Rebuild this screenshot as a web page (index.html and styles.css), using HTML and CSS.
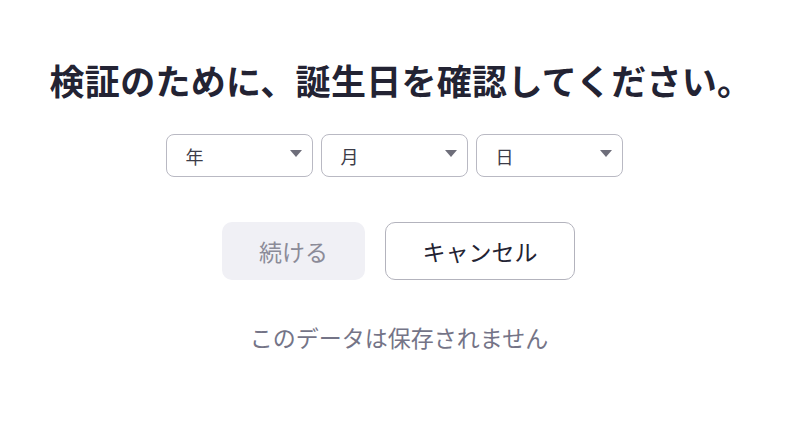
FILE: index.html
```html
<!DOCTYPE html>
<html lang="ja">
<head>
    <meta charset="UTF-8">
    <title>誕生日の確認</title>
    <link rel="stylesheet" href="styles.css">
</head>
<body>
    <div class="age-gate">
        <h1 class="title">検証のために、誕生日を確認してください。</h1>
        <div class="selects">
            <div class="select"><span>年</span><i class="caret"></i></div>
            <div class="select"><span>月</span><i class="caret"></i></div>
            <div class="select"><span>日</span><i class="caret"></i></div>
        </div>
        <div class="actions">
            <button class="btn btn-disabled">続ける</button>
            <button class="btn btn-outline">キャンセル</button>
        </div>
        <p class="note">このデータは保存されません</p>
    </div>
</body>
</html>
```

FILE: styles.css
```css
* {
    margin: 0;
    padding: 0;
    box-sizing: border-box;
}

body {
    background: #fff;
    font-family: "Noto Sans CJK JP", "Noto Sans", sans-serif;
    color: #232333;
}

.age-gate {
    width: 788px;
    padding-top: 56px;
    display: flex;
    flex-direction: column;
    align-items: center;
}

.title {
    font-size: 35px;
    font-weight: 700;
    line-height: 48px;
    letter-spacing: 0.3px;
    padding-left: 14px;
    color: #232333;
}

.selects {
    display: flex;
    gap: 8px;
    margin-top: 30px;
}

.select {
    width: 147px;
    height: 43px;
    border: 1px solid #b9b9c3;
    border-radius: 8px;
    display: flex;
    align-items: center;
    justify-content: space-between;
    padding: 0 10px 0 19px;
    font-size: 18px;
    color: #3c3c48;
}

.caret {
    width: 0;
    height: 0;
    border-left: 6px solid transparent;
    border-right: 6px solid transparent;
    border-top: 7px solid #6e6e7a;
    margin-top: -4px;
}

.actions {
    display: flex;
    gap: 20px;
    margin-top: 45px;
    padding-left: 9px;
}

.btn {
    height: 58px;
    border-radius: 10px;
    font-family: inherit;
    font-size: 23px;
    background: #fff;
}

.btn-disabled {
    width: 143px;
    border: none;
    background: #f0f0f5;
    color: #8b8b98;
}

.btn-outline {
    width: 190px;
    border: 1px solid #b3b3bd;
    color: #232333;
}

.note {
    margin-top: 40px;
    padding-left: 10px;
    font-size: 23px;
    color: #747487;
}
```
